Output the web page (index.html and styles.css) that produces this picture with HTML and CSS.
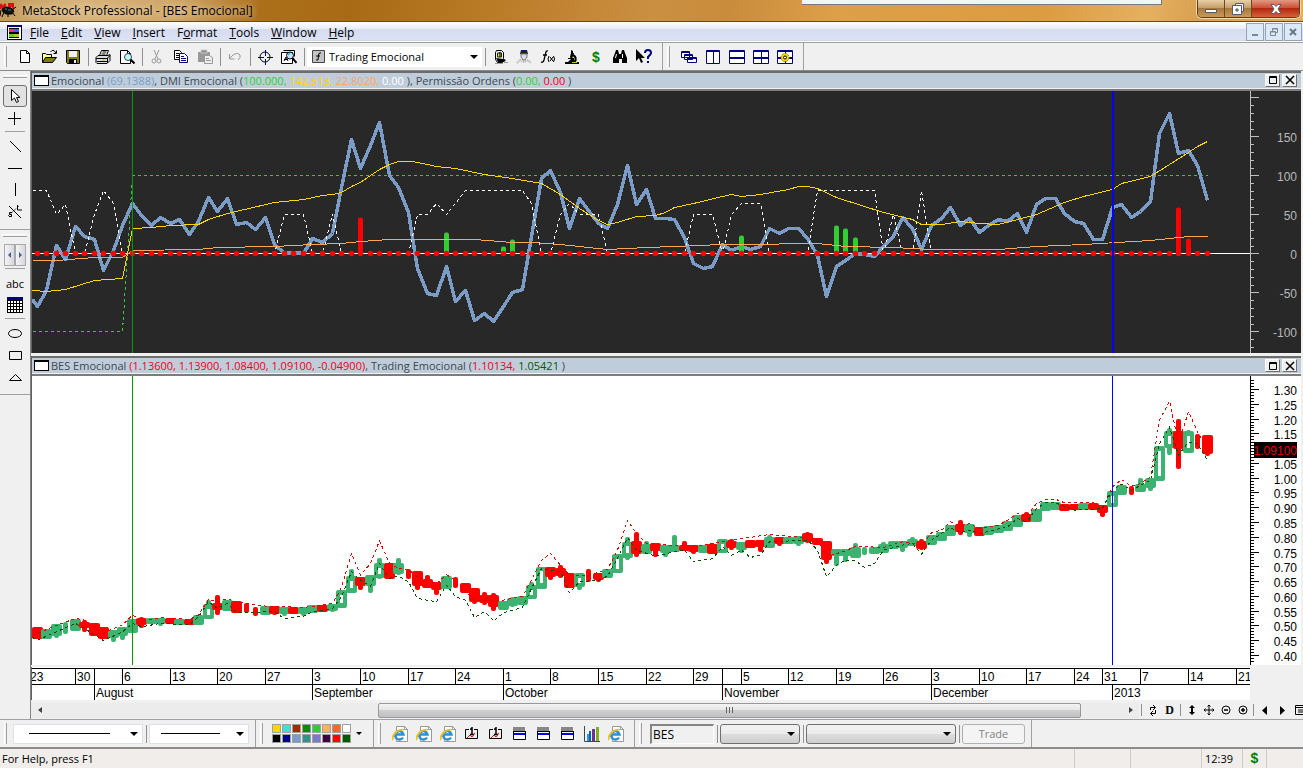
FILE: index.html
```html
<!DOCTYPE html>
<html lang="en">
<head>
    <meta charset="UTF-8">
    <meta name="viewport" content="width=device-width, initial-scale=1.0">
    <title>MetaStock Professional - [BES Emocional]</title>
    <link rel="stylesheet" href="styles.css">
</head>
<body>
    <svg class="defs" width="0" height="0" aria-hidden="true">
        <symbol id="ie" viewBox="0 0 16 16">
            <path d="M4.500.5h8l3 3v12h-11z" fill="#fff" stroke="#999"/>
            <path d="M12.500.5v3h3" fill="none" stroke="#999"/>
            <path d="M11 11.500A4.200 4.200 0 1 1 11.500 8.500H4" fill="none" stroke="#2a8fd8" stroke-width="2.400"/>
            <path d="M1 14C-1 10 6 2 12 4" fill="none" stroke="#f0c020" stroke-width="1.800"/>
        </symbol>
        <symbol id="down" viewBox="0 0 16 16">
            <path d="M5 3.500H1.500v9h12v-9H10" fill="none" stroke="#000"/>
            <path d="M8 1v7M6 3h2M6 8.500h4" stroke="#000" stroke-width="1.500"/>
            <path d="M3 12l3-3 2 2 3-4" fill="none" stroke="#e00"/>
        </symbol>
        <symbol id="win" viewBox="0 0 16 16">
            <path d="M1 1h12v4H1z" fill="#888"/>
            <path d="M1.500 5.500h12v8h-12z" fill="#fff" stroke="#000"/>
            <path d="M1 5h13v1H1z"/>
            <path d="M2 7h11v2H2z" fill="#00f"/>
        </symbol>
    </svg>

    <header class="titlebar">
        <svg class="logo" width="17" height="18" viewBox="0 0 17 18">
            <path d="M0 4l1 5M1 4l2 4 2-4v5M14 4H9v2h4v3H9" fill="none" stroke="#e01010" stroke-width="2"/>
            <path d="M2 9l4-2 5 1 3 3-2 3H6L3 12zM1 10l-1 6M4 12l-2 5M8 13v4M12 12l3 4M13 9l3-2" stroke="#000" fill="#111"/>
            <path d="M5 9h2M8 10h3" stroke="#3a8a8a"/>
        </svg>
        <h1>MetaStock Professional - [BES Emocional]</h1>
        <div class="tray"></div>
        <div class="caption">
            <button aria-label="Minimize"><svg width="14" height="12" viewBox="0 0 14 12"><path d="M1.500 6.500h11v3h-11z" fill="#fff" stroke="#555a70"/></svg></button>
            <button aria-label="Restore"><svg width="14" height="14" viewBox="0 0 14 14"><path d="M4.500 1.500h8v8h-8z" fill="#eee" stroke="#555a70"/><path d="M1.500 3.500h9v9h-9z" fill="#fff" stroke="#555a70"/><path d="M5 7h2v2H5z" fill="#c96" stroke="#555a70"/></svg></button>
            <button class="close" aria-label="Close"><svg width="14" height="12" viewBox="0 0 14 12"><path d="M2 1.500h3l2 2 2-2h3L9 6l3 4.500H9l-2-2-2 2H2L5 6z" fill="#fff" stroke="#555a70"/></svg></button>
        </div>
    </header>

    <nav class="menubar">
        <svg width="16" height="16" viewBox="0 0 16 16" shape-rendering="crispEdges">
            <path d="M1 1h14v14H1z" fill="#fff" stroke="#000"/>
            <path d="M1 1h14v2H1z" fill="#000080"/>
            <path d="M3 5h5v3H3z" fill="#f03070"/><path d="M8 5h5v3H8z" fill="#4060f0"/>
            <path d="M3 10h5v3H3z" fill="#60d020"/><path d="M8 10h5v3H8z" fill="#c0c030"/>
            <path d="M3 4.500h10M3 8.500h10M3 9.500h10M3 13.500h10" stroke="#000"/>
        </svg>
        <button><u>F</u>ile</button>
        <button><u>E</u>dit</button>
        <button><u>V</u>iew</button>
        <button><u>I</u>nsert</button>
        <button>F<u>o</u>rmat</button>
        <button><u>T</u>ools</button>
        <button><u>W</u>indow</button>
        <button><u>H</u>elp</button>
        <div class="mdi">
            <button aria-label="Minimize chart"><svg width="10" height="10" viewBox="0 0 10 10"><path d="M2 7h6v2H2z" fill="#7b8794"/></svg></button>
            <button aria-label="Restore chart"><svg width="10" height="10" viewBox="0 0 10 10" fill="none" stroke="#7b8794"><path d="M3.500 4V1.500h5v4H7M3 2h6"/><path d="M1.500 4.500h5v4h-5zM1 5h6"/></svg></button>
            <button aria-label="Close chart"><svg width="10" height="10" viewBox="0 0 10 10"><path d="M2 2l6 6M8 2L2 8" stroke="#6b7784" stroke-width="2"/></svg></button>
        </div>
    </nav>

    <div class="toolbar" role="toolbar" aria-label="Standard">
        <div class="band">
            <i class="grip"></i>
            <button aria-label="New"><svg viewBox="0 0 16 16"><path d="M3.500 1.500h6l3 3v9h-9z" fill="#fff" stroke="#000"/><path d="M9.500 1.500v3h3" fill="none" stroke="#000"/></svg></button>
            <button aria-label="Open"><svg viewBox="0 0 16 16"><path d="M1.500 13.500v-9h3l1 1h5v3" fill="#ffff9c" stroke="#000"/><path d="M1.500 13.500l3-5h11l-4 5z" fill="#808000" stroke="#000"/><path d="M9.500 3l1.500-1.500h2L15 4M15.500 1.500v3h-3" fill="none" stroke="#000"/></svg></button>
            <button aria-label="Save"><svg viewBox="0 0 16 16"><path d="M1.500 1.500h13v13h-12l-1-1z" fill="#808000" stroke="#000"/><path d="M4 2h8v6H4z" fill="#eee"/><path d="M4 10h8v4H4z"/><path d="M9 11h2v3H9z" fill="#eee"/></svg></button>
            <i class="sep"></i>
            <button aria-label="Print"><svg viewBox="0 0 16 16"><path d="M4.500 6.500l2-5h7l-2 5" fill="#fff" stroke="#000"/><path d="M7.500 3h4M6.500 5h4" stroke="#000"/><path d="M1 8.500l2-2h10l2-1v6l-3 3H2l-1-1z" fill="#ddd" stroke="#000"/><path d="M1 9.500h11l3-3M2 12.500h10M12.500 9v5" stroke="#000" fill="none"/><path d="M7 11h3" stroke="#cc0"/></svg></button>
            <button aria-label="Print preview"><svg viewBox="0 0 16 16"><path d="M1.500 14.500v-13h7l3 3v10z" fill="#fff" stroke="#000"/><path d="M8.500 1.500v3h3" fill="none" stroke="#000"/><circle cx="9" cy="8" r="3.500" fill="#bff" stroke="#444"/><path d="M11.500 10.500l4 4" stroke="#000" stroke-width="2"/></svg></button>
            <i class="sep"></i>
            <button aria-label="Cut" disabled><svg viewBox="0 0 16 16"><path d="M5 1l4 9M10 1l-4 9" stroke="#999"/><circle cx="5" cy="12" r="2" fill="none" stroke="#999"/><circle cx="10" cy="12" r="2" fill="none" stroke="#999"/></svg></button>
            <button aria-label="Copy"><svg viewBox="0 0 16 16"><path d="M1.500 1.500h5l2 2v7h-7z" fill="#fff" stroke="#000"/><path d="M3 4.500h3M3 6.500h4M3 8.500h4" stroke="#000"/><path d="M6.500 4.500h5l3 3v6h-8z" fill="#fff" stroke="#000080"/><path d="M8 7.500h3M8 9.500h5M8 11.500h5" stroke="#000080"/></svg></button>
            <button aria-label="Paste" disabled><svg viewBox="0 0 16 16"><path d="M1 3h12v10H1z" fill="#999"/><path d="M4 1h6v3H4z" fill="#888" stroke="#ccc"/><path d="M7.500 6.500h5l3 2v6h-8z" fill="#eee" stroke="#999"/><path d="M9 9.500h3M9 11.500h5" stroke="#999"/></svg></button>
            <i class="sep"></i>
            <button aria-label="Undo" disabled><svg viewBox="0 0 16 16"><path d="M3 9l3-3q5-3 7 0 1 3-2 5" fill="none" stroke="#999"/><path d="M2.500 5v5h5" fill="none" stroke="#999"/></svg></button>
            <i class="sep"></i>
            <button aria-label="Crosshair"><svg viewBox="0 0 16 16"><circle cx="8" cy="8" r="5" fill="none" stroke="#000"/><path d="M8.500 1v6M8.500 10v6M1 8.500h6M10 8.500h6" stroke="#000080"/></svg></button>
            <button aria-label="Zoom"><svg viewBox="0 0 16 16"><path d="M.5 3.500h11v11H.5z" fill="#fff" stroke="#000"/><path d="M2.500 1.500h11v6M3 12l2-4 2 4M3 10.500h4" stroke="#000" fill="none"/><circle cx="9" cy="6.500" r="3.500" fill="#cdf" stroke="#000"/><path d="M7 6l2-2" stroke="#0cc" stroke-width="1.500"/><path d="M11.500 9l4 5" stroke="#000" stroke-width="2"/></svg></button>
            <i class="sep"></i>
            <label class="pick template">
                <svg width="13" height="13" viewBox="0 0 13 13"><path d="M.5.5h12v12H.5z" fill="#c4c4c4" stroke="#444"/><path d="M9 3Q7 2 6.500 5L6 10H4M4 6h4" fill="none" stroke="#000"/></svg>
                <select aria-label="Template"><option>Trading Emocional</option></select>
            </label>
            <i class="sep"></i>
            <button aria-label="Expert Advisor"><svg viewBox="0 0 16 16"><path d="M4.500 1.500h5l2 2v6l1 2-2 2h-5l-2-3v-7z" fill="#eee" stroke="#000"/><path d="M5.500 4h4v4h-4z" fill="#dd0" stroke="#222"/><path d="M4 9l2 4h6l2-2-3-1z"/><path d="M8 3v5" stroke="#000"/><path d="M3 14.500h8M12 13.500h4" stroke="#999"/></svg></button>
            <button aria-label="The Explorer"><svg viewBox="0 0 16 16"><path d="M5 1h6l1 4H4z" fill="#222"/><path d="M7 1h2v2H7z" fill="#00c"/><path d="M5 5h6v3l-2 3H7L5 8z" fill="#ddd" stroke="#777"/><path d="M1 14l3-3 4 2 4-2 3 3" stroke="#aaa" stroke-width="2" stroke-dasharray="1 1" fill="none"/></svg></button>
            <button aria-label="Indicator Builder"><svg viewBox="0 0 16 16"><path d="M8 2Q6 1 5.500 5L4 11q-1 3-3 2M3 6h4" fill="none" stroke="#000" stroke-width="1.300"/><path d="M9 7q-2 3 0 6M13.500 7q2 3 0 6M10 8l3 4M13 8l-3 4" fill="none" stroke="#000"/></svg></button>
            <button aria-label="System Tester"><svg viewBox="0 0 16 16"><path d="M7 1l2 1v2h1l-2 6H7l-1-2 1-4zM4 9h6v1H4zM1 13h14v2H1z"/><path d="M4 13l3-3h3l1 3z"/><path d="M9 6q4 2 2 7" stroke="#000" stroke-width="2" fill="none"/><path d="M8 13.500h5" stroke="#cc0"/></svg></button>
            <button aria-label="OptionScope" class="dollar">$</button>
            <button aria-label="Find"><svg viewBox="0 0 16 16"><path d="M4 1h2l1 4h2l1-4h2l1 3 2 5v5h-5v-4H7v4H1V9l2-5z"/><path d="M3.500 9l1-4M10.500 9V5" stroke="#fff"/></svg></button>
            <button aria-label="What's this"><svg viewBox="0 0 16 16"><path d="M0 0v12l3-3 2 5 2-1-2-4h4z"/><path d="M9 4q0-3 3-3t3 3q0 1-3 4v2M12 12v2" stroke="#000080" stroke-width="2" fill="none"/></svg></button>
        </div>
        <div class="band layouts">
            <i class="grip"></i>
            <button aria-label="Cascade"><svg viewBox="0 0 16 16" fill="#fff" stroke="#000080"><path d="M.5 2.500h8v6h-8zM1 3.500h7M3.500 5.500h8v5h-8zM4 6.500h7M6.500 8.500h9v5h-9zM7 9.500h8"/></svg></button>
            <button aria-label="Tile columns"><svg viewBox="0 0 16 16" fill="#fff" stroke="#000080"><path d="M1.500 1.500h13v13h-13zM1 2.500h14M8.500 2v12"/></svg></button>
            <button aria-label="Tile rows"><svg viewBox="0 0 16 16" fill="#fff" stroke="#000080"><path d="M.5 1.500h15v13H.5zM0 2.500h16M0 8.500h16M0 9.500h16"/></svg></button>
            <button aria-label="Tile grid"><svg viewBox="0 0 16 16" fill="#fff" stroke="#000080"><path d="M.5 1.500h15v13H.5zM0 2.500h16M0 8.500h16M0 9.500h16M8.500 2v12"/></svg></button>
            <button aria-label="Tile options"><svg viewBox="0 0 16 16" fill="#fff" stroke="#000080"><path d="M.5 1.500h15v13H.5zM0 2.500h16M0 8.500h16M0 9.500h16M8.500 2v12"/><circle cx="8" cy="8.500" r="4" fill="#fd0" stroke="#880" stroke-dasharray="2 1"/><circle cx="8" cy="8.500" r="1.500" fill="#fff" stroke="#000"/></svg></button>
        </div>
    </div>

    <div class="workspace">
        <aside class="toolbox" role="toolbar" aria-label="Drawing">
            <div class="group">
                <i class="hgrip"></i>
                <button class="active" aria-label="Select"><svg viewBox="0 0 16 16"><path d="M4.500 1.500v11l3-2.500 2 4.500 2-1-2-4h3.500z" fill="#fff" stroke="#000"/></svg></button>
                <button aria-label="Crosshair"><svg viewBox="0 0 16 16"><path d="M7.500 2v13M1 8.500h13" stroke="#000"/></svg></button>
                <i class="hsep"></i>
                <button aria-label="Trendline"><svg viewBox="0 0 16 16"><path d="M3 3l11 11" stroke="#000"/></svg></button>
                <button aria-label="Horizontal line"><svg viewBox="0 0 16 16"><path d="M1 8.500h14" stroke="#000"/></svg></button>
                <button aria-label="Vertical line"><svg viewBox="0 0 16 16"><path d="M8.500 1v13" stroke="#000"/></svg></button>
                <button aria-label="Speed line"><svg viewBox="0 0 16 16"><path d="M2 2l12 12" stroke="#000"/><path d="M1 12L12 2" stroke="#000" stroke-dasharray="1 1"/><path d="M10.500 1v5H15M5 8.500H2.500v2h2v2H2" stroke="#000" fill="none"/></svg></button>
            </div>
            <div class="group">
                <i class="hgrip"></i>
                <div class="spin">
                    <button aria-label="Previous"></button>
                    <button aria-label="Next" class="next"></button>
                </div>
                <i class="hsep"></i>
                <button class="abc">abc</button>
                <button aria-label="Grid"><svg viewBox="0 0 16 16"><path d="M0 0h16v16H0z" fill="#fff"/><path d="M.5 0v16M3.500 3v13M6.500 3v13M9.500 3v13M12.500 3v13M15.500 0v16M0 3.500h16M0 6.500h16M0 9.500h16M0 12.500h16M0 15.500h16" stroke="#000"/><path d="M0 0h16v3H0z" fill="#000080"/></svg></button>
                <i class="hsep"></i>
                <button aria-label="Ellipse"><svg viewBox="0 0 16 16"><ellipse cx="8" cy="8.500" rx="6.500" ry="4" fill="none" stroke="#000"/></svg></button>
                <button aria-label="Rectangle"><svg viewBox="0 0 16 16"><path d="M2.500 4.500h12v8h-12z" fill="none" stroke="#000"/></svg></button>
                <button aria-label="Triangle"><svg viewBox="0 0 16 16"><path d="M2.500 11.500h12l-6-6z" fill="none" stroke="#000"/></svg></button>
            </div>
        </aside>

        <main class="charts">
            <section class="pane pane-emo">
                <header>
                    <i class="chip"></i>
                    <h2>Emocional <span class="c-blue">(69.1388)</span>, DMI Emocional (<span class="c-green">100.000,</span> <span class="c-gold">142.513,</span> <span class="c-orange">22.8020,</span> <span class="c-white">0.00</span> ), Permissão Ordens (<span class="c-green">0.00,</span> <span class="c-red">0.00</span> )</h2>
                    <button aria-label="Maximize pane"><svg viewBox="0 0 10 10"><path d="M1.500 1.500h7v7h-7zM1 2.500h8" fill="none" stroke="#000"/></svg></button>
                    <button aria-label="Close pane"><svg viewBox="0 0 10 10"><path d="M1 1l8 8M9 1L1 9" stroke="#000" stroke-width="1.500"/></svg></button>
                </header>
                <svg class="plot" id="emo"></svg>
            </section>
            <section class="pane pane-price">
                <header>
                    <i class="chip"></i>
                    <h2>BES Emocional <span class="c-red">(1.13600, 1.13900, 1.08400, 1.09100, -0.04900)</span>, Trading Emocional (<span class="c-red">1.10134,</span> <span class="c-dark">1.05421</span> )</h2>
                    <button aria-label="Maximize pane"><svg viewBox="0 0 10 10"><path d="M1.500 1.500h7v7h-7zM1 2.500h8" fill="none" stroke="#000"/></svg></button>
                    <button aria-label="Close pane"><svg viewBox="0 0 10 10"><path d="M1 1l8 8M9 1L1 9" stroke="#000" stroke-width="1.500"/></svg></button>
                </header>
                <svg class="plot" id="price"></svg>
            </section>
            <svg class="ruler" id="ruler"></svg>
            <div class="scrollrow">
                <div class="scrollbar">
                    <button class="left" aria-label="Scroll left"></button>
                    <span class="before"></span>
                    <span class="thumb"><i></i><i></i><i></i></span>
                    <span class="after"></span>
                    <button class="right" aria-label="Scroll right"></button>
                </div>
                <i class="sep"></i>
                <button aria-label="Refresh"><svg viewBox="0 0 12 12"><path d="M3.500 6V3.500H8M6 1l2.500 2.500L6 6M8.500 6v3.500H4M6 7L3.500 9.500 6 12" fill="none" stroke="#000"/></svg></button>
                <button class="period">D</button>
                <i class="sep"></i>
                <button aria-label="Fit height"><svg viewBox="0 0 12 12"><path d="M6 1l3 3H7v4h2l-3 3-3-3h2V4H3z"/></svg></button>
                <button aria-label="Move"><svg viewBox="0 0 12 12"><path d="M6 1v10M1 6h10M4.500 2.500L6 1l1.500 1.500M4.500 9.500L6 11l1.500-1.500M2.500 4.500L1 6l1.500 1.500M9.500 4.500L11 6 9.500 7.500" fill="none" stroke="#000"/></svg></button>
                <button aria-label="Zoom out"><svg viewBox="0 0 12 12"><circle cx="6" cy="6" r="4" fill="none" stroke="#000"/><path d="M4 6h4" stroke="#000" stroke-width="1.500"/></svg></button>
                <button aria-label="Zoom in"><svg viewBox="0 0 12 12"><circle cx="6" cy="6" r="4" fill="none" stroke="#000"/><path d="M4 6h4M6 4v4" stroke="#000" stroke-width="1.500"/></svg></button>
                <i class="sep"></i>
                <button aria-label="Back"><svg viewBox="0 0 12 12"><path d="M8 2v9L3 6.500z"/></svg></button>
                <button aria-label="Forward"><svg viewBox="0 0 12 12"><path d="M4 2v9l5-4.500z"/></svg></button>
                <button aria-label="List"><svg viewBox="0 0 12 12"><path d="M2.500 1.500h8v9h-8zM2 3.500h8M5 6h5M5 8h5" fill="none" stroke="#000"/></svg></button>
            </div>
        </main>
    </div>

    <div class="bottombar" role="toolbar" aria-label="Line and trade">
        <div class="band">
            <i class="grip"></i>
            <label class="pick line-style"><select aria-label="Line style"><option></option></select></label>
            <i class="sep"></i>
            <label class="pick line-weight"><select aria-label="Line weight"><option></option></select></label>
        </div>
        <div class="band colors">
            <i class="grip"></i>
            <div class="palette" id="palette"></div>
            <button class="more" aria-label="More colors"></button>
        </div>
        <div class="band links">
            <i class="grip"></i>
            <button aria-label="Web 1"><svg><use href="#ie"/></svg></button>
            <button aria-label="Web 2"><svg><use href="#ie"/></svg></button>
            <button aria-label="Web 3"><svg><use href="#ie"/></svg></button>
            <button aria-label="Download 1"><svg><use href="#down"/></svg></button>
            <button aria-label="Download 2"><svg><use href="#down"/></svg></button>
            <button aria-label="Window 1"><svg><use href="#win"/></svg></button>
            <button aria-label="Window 2"><svg><use href="#win"/></svg></button>
            <button aria-label="Window 3"><svg><use href="#win"/></svg></button>
            <button aria-label="Statistics"><svg viewBox="0 0 16 16"><path d="M.5 0v15.500H16" fill="none" stroke="#444"/><path d="M3 8h2v7H3z" fill="#20a0e0"/><path d="M5 5h2v10H5z" fill="#1060b0"/><path d="M8 3h3v12H8z" fill="#703090"/><path d="M12 1h3v14h-3z" fill="#80b020"/></svg></button>
            <button aria-label="Web 4"><svg><use href="#ie"/></svg></button>
        </div>
        <div class="band trade">
            <i class="grip"></i>
            <input class="symbol" type="text" value="BES" aria-label="Symbol">
            <i class="sep"></i>
            <label class="pick grey account"><select aria-label="Account"><option></option></select></label>
            <i class="sep"></i>
            <label class="pick grey order"><select aria-label="Order"><option></option></select></label>
            <i class="sep"></i>
            <button class="trade-btn" disabled>Trade</button>
        </div>
    </div>

    <footer class="statusbar">
        <p>For Help, press F1</p>
        <span class="cell c1"></span>
        <span class="cell c2"></span>
        <span class="cell clock">12:39</span>
        <span class="cell dollar">$</span>
        <span class="cell c3"></span>
    </footer>
    <script src="app.js"></script>
</body>
</html>
```
FILE: styles.css
```css
* {
    box-sizing: border-box;
}

body {
    display: flex;
    flex-direction: column;
    min-height: 100vh;
    margin: 0;
    background: #f0f0f0;
    color: #000;
    font-family: "Open Sans", "Noto Sans", sans-serif;
    font-size: 11px;
}

h1, h2, p {
    margin: 0;
    font-size: inherit;
    font-weight: normal;
}

button, select, input {
    margin: 0;
    padding: 0;
    border: 0;
    background: none;
    color: inherit;
    font: inherit;
}

svg {
    display: block;
}

.defs {
    position: absolute;
}

/* title bar */
.titlebar {
    display: flex;
    align-items: flex-start;
    height: 22px;
    padding-right: 3px;
    border-bottom: 1px solid #6b4a20;
    background: linear-gradient(100deg, #c29a5c 0, #d8b47c 6%, #cfa567 14%, #ac6f1a 20%, #a86a14 27%, #bb7c28 38%, #cb8f42 50%, #c98c3c 56%, #dd9f48 64%, #dc9c40 80%, #e5b060 88%, #d8a050 92%, #e0ae68 100%);
}

.logo {
    margin-right: 5px;
}

.titlebar h1 {
    flex: 1;
    line-height: 21px;
    text-shadow: 0 0 6px #fff0d0;
    font-size: 12px;
}

.tray {
    width: 360px;
    height: 5px;
    margin-right: 35px;
    border: solid #777b80;
    border-width: 0 1px 1px 0;
    background: #f4f4f4;
}

.caption {
    display: flex;
    height: 18px;
    border: 1px solid #5b4020;
    border-top: 0;
    border-radius: 0 0 5px 5px;
    box-shadow: 0 0 0 1px #f0d8a8;
    overflow: hidden;
}

.caption button {
    display: grid;
    place-items: center;
    width: 27px;
    border-right: 1px solid #6b4a20;
    background: linear-gradient(#e8d0a8, #c29a64 50%, #a8783c 50%, #c8985c);
}

.caption .close {
    width: 47px;
    border: 0;
    background: linear-gradient(#e09a80, #cf5038 45%, #b02810 50%, #d86038);
}

/* menu */
.menubar {
    display: flex;
    align-items: center;
    gap: 12px;
    height: 21px;
    padding: 0 1px 0 6px;
    border-bottom: 1px solid #a0a0a0;
    background: linear-gradient(#fff, #e8ecf6 35%, #d6dcee 36%, #dde3f6 90%, #b8c0d8 91%, #fff 95%);
    font-size: 12px;
}

.menubar svg {
    margin-right: -4px;
}

.mdi {
    display: flex;
    gap: 1px;
    margin-left: auto;
}

.mdi button {
    display: grid;
    place-items: center;
    width: 18px;
    height: 18px;
    border: 1px solid #94a4b4;
    background: #dceaf8;
}

.mdi svg {
    margin: 0;
}

/* toolbars */
.toolbar {
    display: flex;
    height: 28px;
    border-bottom: 1px solid #8c8c8c;
}

.band {
    display: flex;
    align-items: center;
    padding: 0 6px 0 4px;
    border-right: 1px solid #a0a0a0;
}

.band button {
    display: grid;
    place-items: center;
    width: 24px;
    height: 22px;
}

.band button svg {
    width: 16px;
    height: 16px;
}

.grip {
    width: 3px;
    height: 21px;
    margin-right: 6px;
    border: solid #fff;
    border-width: 0 0 0 1px;
    border-right: 1px solid #a0a0a0;
}

.layouts .grip {
    margin-right: 7px;
}

.sep {
    width: 1px;
    height: 18px;
    margin: 0 2px 0 3px;
    background: #909090;
}

.pick {
    position: relative;
    display: flex;
    align-items: center;
    background: #fff;
}

.pick select {
    flex: 1;
    height: 20px;
    appearance: none;
}

.pick::after {
    content: "";
    position: absolute;
    right: 4px;
    border: solid transparent;
    border-width: 4px 4px 0;
    border-top-color: #000;
    pointer-events: none;
}

.template {
    width: 175px;
    padding-left: 5px;
    gap: 4px;
}

.band .dollar, .statusbar .dollar {
    color: #008000;
    font: bold 14px "Liberation Sans", Arial, sans-serif;
}

/* drawing tools */
.workspace {
    display: flex;
    flex: 1;
}

.toolbox {
    width: 31px;
    border-right: 1px solid #848484;
}

.group {
    display: flex;
    flex-direction: column;
    align-items: center;
    padding: 4px 0 6px;
    border-bottom: 1px solid #a0a0a0;
}

.group button {
    display: grid;
    place-items: center;
    width: 24px;
    height: 22px;
}

.group button svg {
    width: 16px;
    height: 16px;
}

.group .active {
    border: 1px solid #707070;
    border-radius: 3px;
    background: #e2e2e2;
}

.hgrip {
    width: 24px;
    height: 3px;
    margin-bottom: 7px;
    border: solid #a0a0a0;
    border-width: 0 0 1px;
    border-top: 1px solid #fff;
}

.hsep {
    width: 20px;
    height: 1px;
    margin: 2px 0 3px;
    background: #a0a0a0;
}

.spin {
    display: flex;
}

.spin button {
    width: 11px;
    border: 1px solid #a8a8b0;
    background: linear-gradient(90deg, #f4f4f4, #d8d8dc);
}

.spin button::before {
    content: "";
    border: solid transparent;
    border-width: 3px 3px 3px 0;
    border-right-color: #4060a0;
}

.spin .next::before {
    border-width: 3px 0 3px 3px;
    border-left-color: #4060a0;
}

/* chart panes */
.charts {
    display: flex;
    flex: 1;
    flex-direction: column;
    min-width: 0;
    overflow: hidden;
}

.pane {
    display: flex;
    flex-direction: column;
    margin-right: 2px;
    margin-bottom: 3px;
    border-left: 1px solid #606060;
}

.pane-emo {
    flex: 262 1 20px;
}

.pane-price {
    flex: 290 1 20px;
    margin-bottom: 2px;
}

.pane header {
    display: flex;
    align-items: center;
    height: 20px;
    padding: 0 4px 0 2px;
    border-top: 2px solid #6c6c6c;
    border-bottom: 2px solid #7c7c7c;
    background: #bfcddb;
    box-shadow: inset 0 -1px #f0f0f0;
}

.pane-emo header {
    padding-bottom: 2px;
}

.chip {
    width: 15px;
    height: 11px;
    margin-right: 2px;
    border: 1px solid #000;
    border-top-width: 2px;
    background: #fff;
}

.pane h2 {
    flex: 1;
    color: #404850;
}

.pane header button {
    display: grid;
    place-items: center;
    width: 15px;
    height: 13px;
    margin-left: 2px;
    border: 1px solid #fff;
    border-right-color: #707070;
    border-bottom-color: #707070;
    background: #f0f0f0;
}

.pane header button svg {
    width: 10px;
    height: 10px;
}

.c-blue { color: #7a9cc6; }
.c-green { color: #32cd32; }
.c-gold { color: #ffd700; }
.c-orange { color: #ffa654; }
.c-white { color: #fff; }
.c-red { color: #f00018; }
.c-dark { color: #005a00; }

.plot {
    flex: 1 1 0;
    width: 100%;
    min-height: 0;
    font: 12px "Liberation Sans", Arial, sans-serif;
}

.pane-emo .plot {
    background: #282828;
}

.pane-price .plot {
    background: #fff;
}

.ruler {
    width: calc(100% - 53px);
    height: 33px;
    border-left: 1px solid #606060;
    background: #fff;
    font: 12px "Liberation Sans", Arial, sans-serif;
}

.scrollrow {
    display: flex;
    align-items: center;
    width: calc(100% + 4px);
    height: 16px;
    margin: 2px 0 1px;
}

.scrollrow > button {
    display: grid;
    flex: none;
    place-items: center;
    width: 17px;
    height: 16px;
}

.scrollrow > button svg {
    width: 12px;
    height: 12px;
}

.scrollrow > .sep {
    flex: none;
    height: 12px;
    margin: 0 2px;
}

.scrollrow .period {
    font: bold 12px "Liberation Serif", serif;
}

.scrollbar {
    display: flex;
    flex: 1;
    height: 15px;
    background: #ececec;
}

.scrollbar button {
    display: grid;
    place-items: center;
    width: 17px;
}

.scrollbar button::before {
    content: "";
    border: solid transparent;
    border-width: 3px 4px 3px 0;
    border-right-color: #404040;
}

.scrollbar .right::before {
    border-width: 3px 0 3px 4px;
    border-left-color: #404040;
}

.before {
    flex: 330;
}

.thumb {
    display: flex;
    flex: 702;
    align-items: center;
    justify-content: center;
    gap: 2px;
    border: 1px solid #989898;
    border-radius: 2px;
    background: linear-gradient(#f4f4f4, #e4e4e6 48%, #cfcfd2 50%, #c0c0c4);
}

.thumb i {
    width: 1px;
    height: 6px;
    background: #606060;
}

.after {
    flex: 41;
}

/* bottom bars */
.bottombar {
    display: flex;
    height: 30px;
    border-top: 1px solid #a0a0a0;
    border-bottom: 2px solid #8c8c8c;
}

.bottombar .pick {
    height: 20px;
    border: 1px solid #dde2e8;
}

.line-style {
    width: 130px;
}

.line-weight {
    width: 100px;
}

.line-style::before, .line-weight::before {
    content: "";
    position: absolute;
    left: 15px;
    right: 32px;
    height: 1px;
    background: #000;
}

.line-weight::before {
    left: 11px;
    right: 28px;
}

.colors .grip {
    margin-right: 9px;
}

.palette {
    display: grid;
    grid-template-columns: repeat(8, 9px);
    gap: 1px;
}

.palette button {
    width: 9px;
    height: 9px;
    border: 1px solid #a0a0a0;
}

.band .more {
    width: 16px;
}

.more::before {
    content: "";
    border: solid transparent;
    border-width: 3px 3px 0;
    border-top-color: #000;
}

.links .grip {
    margin-right: 7px;
}

.trade .grip {
    margin-right: 8px;
}

.symbol {
    width: 64px;
    height: 20px;
    padding-left: 1px;
    border: 2px solid #848484;
    border-right: 1px solid #fff;
    border-bottom: 1px solid #fff;
    font-size: 12px;
}

.bottombar .grey {
    border: 1px solid #707070;
    border-radius: 3px;
    background: linear-gradient(#f2f2f2, #ebebeb 50%, #ddd 50%, #cfcfcf);
}

.account {
    width: 80px;
}

.order {
    width: 150px;
}

.band .trade-btn {
    width: 63px;
    height: 20px;
    border: 1px solid #adb2b5;
    border-radius: 3px;
    background: #f4f4f4;
    color: #838383;
}

.statusbar {
    display: flex;
    height: 19px;
    padding-left: 2px;
    background: #f0edeb;
    line-height: 20px;
}

.statusbar p {
    flex: 1;
}

.cell {
    border-left: 1px solid #d0ccca;
    text-align: center;
}

.c1 { width: 56px; }
.c2 { width: 71px; }
.clock { width: 41px; padding-right: 6px; }
.statusbar .dollar { width: 24px; line-height: 19px; }
.c3 { width: 37px; }
```
FILE: app.js
```js
const NS = 'http://www.w3.org/2000/svg';
const AXIS = 51;
const SLOTS = 128;

const emocional = [
    -68, -47, 11, -7, 35, 23, 18, -21, 4, 36, 65, 49, 37, 47, 39, 44, 25, 41, 72, 55,
    71, 38, 40, 31, 47, 12, 1, 2, 1, 20, 15, 26, 85, 147, 110, 139, 168, 101, 85, 53,
    -19, -51, -53, -16, -61, -47, -85, -76, -87, -68, -49, -46, 23, 97, 107, 79, 32, 71, 56, 39,
    32, 64, 113, 63, 83, 45, 46, 44, 21, -12, -19, -16, 12, 4, 9, 6, 10, 33, 26, 33,
    33, 20, -2, -55, -16, -8, 1, -1, -3, 10, 23, 47, 33, 6, 36, 46, 59, 36, 45, 27,
    36, 44, 41, 52, 27, 63, 71, 71, 52, 41, 39, 19, 19, 59, 63, 47, 54, 67, 154, 180,
    129, 133, 113, 69
];

// [bar, value] pairs
const gold = [[-.5, -47], [1, -48], [3, -45], [6, -34], [9, -32], [10, 33], [12, 34], [14, 37], [17, 38], [18, 44], [20, 52], [25, 66], [28, 70], [30, 75], [31, 76], [32, 79], [33, 86], [34, 91], [35, 100], [36, 108], [37, 115], [38, 119], [39.5, 119], [41, 115], [42, 112], [44, 110], [47, 102], [50, 97], [53, 90], [55, 76], [57, 58], [59, 43], [60, 38], [61, 40], [63, 48], [65, 49], [66, 53], [67, 59], [69, 65], [72, 74], [73, 76], [74, 74], [76, 76], [79, 82], [80, 87], [81, 87], [82, 84], [84, 73], [87, 61], [89, 53], [92, 44], [93, 38], [95, 38], [97, 41], [99, 39], [101, 38], [103, 44], [105, 51], [108, 66], [110, 74], [113, 83], [114, 90], [117, 99], [119, 115], [121, 130], [122, 138], [123, 144]];
const orange = [[-.5, -8], [2, -8], [6, -5], [9, -5], [10, 5], [17, 6], [19, 8], [25, 10], [29, 12], [32, 13], [34, 16], [37, 19], [40, 19], [42, 18], [46, 18], [50, 15], [52, 15], [55, 12], [58, 8], [60, 6], [62, 7], [64, 8], [67, 10], [72, 12], [76, 12], [80, 14], [82, 14], [85, 10], [90, 8], [94, 6], [101, 6], [105, 9], [110, 12], [117, 17], [121, 22], [123, 23]];
const white = [[-.5, 81], [1, 81], [2, 50], [3, 64], [4, 0], [5, 0], [6, 51], [7, 81], [8, 65], [9, 0], [25, 0], [26, 50], [28, 50], [29, 0], [30, 0], [31, 50], [32, 0], [39, 0], [40, 50], [41, 50], [42, 65], [43, 50], [44, 65], [45, 81], [51, 81], [52, 65], [53, 0], [54, 0], [55, 50], [56, 65], [57, 50], [59, 50], [60, 0], [68, 0], [69, 50], [71, 50], [72, 0], [73, 50], [74, 65], [76, 65], [77, 0], [81, 0], [82, 81], [88, 81], [89, 0], [90, 50], [91, 0], [92, 0], [93, 81], [94, 0], [123, 0]];
const trend = [[-.5, -100], [9, -100], [10, 100], [123, 100]];
const signals = [[34, 47, '#f00'], [120, 59, '#f00'], [121, 20, '#f00'], [43, 28], [49, 10], [50, 18], [74, 24], [84, 37], [85, 33], [86, 21]];

// candles: colour, body top, body bottom, [high, low]; levels count down from 0.9255
const candles = [
    'r 382 418', 'g 388 418', 'g 373 410 373 416', 'g 0 0 365 402', 'g 357 392', 'r 367 385 360 396', 'r 370 408', 'r 382 418', 'g 390 415 390 425', 'g 380 408 380 418',
    'g 357 398', 'r 355 375 350 382', 'g 355 374', 'g 353 372 353 376', 'r 355 372', 'g 356 374', 'r 356 374', 'g 346 376', 'g 312 358 300 358', 'r 310 330 284 344',
    'g 300 332', 'r 303 338', 'r 0 0 310 340', 'r 0 0 320 347', 'g 317 343', 'r 317 340 317 344', 'g 322 342 322 348', 'r 322 342', 'g 320 342 320 346', 'g 316 340',
    'r 314 334', 'g 313 333 313 338', 'g 270 323', 'g 228 278 208 278', 'r 230 258 230 268', 'g 225 258 225 280', 'g 190 236 174 236', 'r 188 235', 'g 190 222 174 226', 'r 0 0 206 235',
    'r 212 256 212 268', 'r 236 262 226 262', 'r 245 270 245 284', 'g 228 268', 'r 0 0 232 265', 'r 248 278', 'r 263 305 263 310', 'r 285 308 276 316', 'r 286 322 280 334', 'g 302 328',
    'g 295 320 290 320', 'g 288 316', 'g 256 298 246 298', 'g 200 265', 'r 200 230 200 240', 'r 204 228 196 234', 'r 218 262', 'g 220 262 220 270', 'r 0 0 207 246', 'r 218 240 218 244',
    'g 208 234', 'g 163 220', 'g 125 174 112 180', 'r 122 162 96 170', 'g 133 163 124 163', 'r 130 155 130 172', 'g 134 158 134 170', 'g 134 156 105 156', 'r 134 152 122 152', 'r 136 156 136 164',
    'g 134 158', 'r 132 162', 'g 118 160', 'r 122 142 116 148', 'g 126 150 126 158', 'r 121 144', 'r 121 142 121 158', 'g 112 144 104 144', 'r 110 130 110 138', 'g 110 130',
    'g 108 132 108 138', 'r 98 126 94 126', 'r 114 136', 'r 124 182 124 192', 'g 148 170 148 200', 'g 146 166 146 186', 'g 142 174 130 174', 'g 0 0 140 164', 'g 142 162', 'g 132 158 127 158',
    'g 124 148', 'g 124 146 124 156', 'g 116 138 112 138', 'r 122 146 118 150', 'g 105 136', 'g 96 124', 'g 74 106', 'r 70 94 60 104', 'g 72 100 72 112', 'r 80 106',
    'g 78 106', 'g 75 98', 'g 62 92', 'g 45 80', 'r 42 66 36 66', 'g 25 64', 'g 6 34', 'g 6 30', 'r 10 30', 'r 12 30',
    'g 8 30', 'r 8 28', 'r 15 40 15 50', 'g -27 22', 'g -45 -14', 'r 0 0 -44 -16', 'g -50 -26 -66 -26', 'g -68 -38 -68 -28', 'g -162 -58', 'g -207 -156 -218 -136',
    'r -207 -154 -243 -94', 'g -207 -142 -212 -142', 'r 0 0 -200 -156', 'r -196 -140 -196 -132'
];
const upper = [[-.5, 405], [0, 400], [2, 376], [4, 355], [5, 360], [7, 400], [8, 385], [9, 375], [10, 345], [11, 362], [13, 353], [16, 358], [17, 345], [18, 298], [19, 306], [20, 295], [21, 306], [24, 318], [28, 322], [30, 315], [31, 310], [32, 262], [33, 160], [34, 225], [35, 190], [36, 122], [37, 190], [38, 205], [39, 208], [40, 230], [42, 250], [43, 224], [44, 240], [46, 300], [49, 300], [51, 288], [52, 240], [53, 180], [54, 160], [55, 195], [56, 225], [58, 225], [60, 208], [61, 150], [62, 60], [63, 100], [64, 130], [67, 136], [70, 135], [73, 120], [77, 103], [80, 110], [82, 118], [83, 170], [85, 152], [86, 138], [89, 142], [91, 125], [93, 135], [94, 98], [95, 90], [96, 65], [97, 78], [98, 70], [99, 86], [101, 75], [102, 60], [103, 40], [104, 48], [105, 10], [106, -3], [107, -3], [108, 8], [111, 8], [112, 25], [113, -40], [114, -62], [115, -42], [116, -50], [117, -70], [118, -240], [119, -298], [120, -170], [121, -266], [122, -205], [123, -150]];
const lower = [[-.5, 412], [0, 420], [2, 395], [4, 370], [5, 385], [7, 422], [9, 395], [10, 370], [11, 380], [13, 370], [16, 374], [17, 350], [18, 305], [19, 325], [20, 310], [21, 337], [25, 335], [26, 356], [28, 348], [29, 335], [31, 325], [32, 290], [33, 215], [34, 240], [35, 258], [36, 190], [37, 235], [38, 228], [39, 245], [40, 295], [42, 305], [43, 255], [44, 290], [45, 300], [46, 352], [47, 335], [48, 362], [49, 338], [51, 322], [52, 265], [53, 205], [55, 215], [56, 278], [57, 245], [59, 240], [60, 228], [61, 175], [62, 112], [63, 150], [65, 168], [67, 155], [68, 150], [69, 184], [71, 176], [72, 140], [73, 165], [74, 150], [75, 172], [76, 165], [77, 125], [81, 120], [82, 150], [83, 230], [84, 195], [85, 180], [86, 182], [87, 202], [88, 190], [89, 150], [91, 135], [92, 130], [93, 162], [94, 120], [96, 82], [97, 98], [98, 90], [99, 100], [102, 80], [103, 55], [104, 65], [105, 25], [106, 8], [107, 8], [109, 30], [112, 25], [113, -30], [114, -48], [115, -30], [117, -60], [118, -170], [119, -220], [120, -135], [121, -175], [122, -170], [123, -118]];

const weeks = [[-1, '23'], [4, '30'], [9, '6'], [14, '13'], [19, '20'], [24, '27'], [29, '3'], [34, '10'], [39, '17'], [44, '24'], [49, '1'], [54, '8'], [59, '15'], [64, '22'], [69, '29'], [74, '5'], [79, '12'], [84, '19'], [89, '26'], [94, '3'], [99, '10'], [104, '17'], [109, '24'], [112, '31'], [116, '7'], [121, '14'], [126, '21']];
const months = [[6, 'August'], [29, 'September'], [49, 'October'], [72, 'November'], [94, 'December'], [113, '2013']];
const colors = ['#ffd700', '#40e0d0', '#a52a00', '#009000', '#32cd32', '#ffb060', '#ff6a20', '#fff', '#000', '#000090', '#7a9cc6', '#38908c', '#7a7ac6', '#400040', '#f00', '#005a00'];

function add(parent, tag, attrs, text) {
    const el = document.createElementNS(NS, tag);
    for (const key in attrs) el.setAttribute(key, attrs[key]);
    if (text !== undefined) el.textContent = text;
    parent.appendChild(el);
    return el;
}

function line(svg, x1, y1, x2, y2, stroke, width) {
    add(svg, 'path', { d: `M${x1} ${y1}L${x2} ${y2}`, stroke, 'stroke-width': width || 1, 'shape-rendering': 'crispEdges' });
}

function polyline(svg, points, x, y, stroke, width, dash) {
    add(svg, 'polyline', {
        points: points.map(p => x(p[0]) + ',' + y(p[1])).join(' '),
        fill: 'none', stroke, 'stroke-width': width, 'stroke-linejoin': 'round',
        'stroke-dasharray': dash || 'none', 'shape-rendering': 'crispEdges'
    });
}

function scaleX(width) {
    return i => Math.floor((i + 0.53) * width / SLOTS) + 0.5;
}

function drawEmocional() {
    const svg = document.getElementById('emo');
    svg.innerHTML = '';
    const w = svg.clientWidth - AXIS, h = svg.clientHeight;
    const x = scaleX(w);
    const y = v => Math.round(h * 0.62 - v * h / 336) + 0.5;

    line(svg, 0, y(0), w, y(0), '#fff');
    polyline(svg, trend, x, y, '#32cd32', 1, '3 3');
    polyline(svg, [[-.5, -58]].concat(emocional.map((v, i) => [i, v])), x, y, '#7a9cc6', 3.5);
    polyline(svg, white, x, y, '#fff', 1, '3 3');
    for (const [i, v, color] of signals) {
        const top = y(v);
        add(svg, 'rect', { x: x(i) - 2.5, y: top, width: 5, height: y(0) - top, rx: 2, fill: color || '#32cd32' });
    }
    polyline(svg, orange, x, y, '#ffa654', 1);
    polyline(svg, gold, x, y, '#ffd700', 1);
    emocional.forEach((v, i) => add(svg, 'circle', { cx: x(i), cy: y(0), r: 2.8, fill: '#f00' }));
    line(svg, x(10), 0, x(10), h, '#009a00');
    line(svg, x(113), 0, x(113), h, '#00f', 2);

    line(svg, w + .5, 0, w + .5, h, '#c0c0c0');
    for (let v = -120; v <= 200; v += 10) {
        line(svg, w, y(v), w + (v % 50 ? 4 : 9), y(v), '#c0c0c0');
        if (v % 50 === 0 && v < 200) {
            add(svg, 'text', { x: w + 47, y: y(v) + 5, 'text-anchor': 'end', fill: '#b8b8b8' }, v);
        }
    }
}

function drawPrice() {
    const svg = document.getElementById('price');
    svg.innerHTML = '';
    const w = svg.clientWidth - AXIS, h = svg.clientHeight;
    const x = scaleX(w);
    const y = p => h * 0.047 + (1.3 - p) * h * 1.022;
    const level = u => y(0.9255 - u / 886.8);

    candles.forEach((row, i) => {
        const [c, top, bottom, high, low] = row.split(' ');
        const fill = c === 'r' ? '#f00' : '#3cb371';
        const bar = (dx, a, b) => add(svg, 'rect', {
            x: x(i) - dx, y: Math.round(level(a)), width: dx * 2, height: Math.round(level(b) - level(a)), rx: 2, fill
        });
        if (high) bar(2.5, high, low);
        if (top === '0' && bottom === '0') return;
        bar(5.5, top, bottom);
        if (c === 'g' && bottom - top > 41) {
            add(svg, 'rect', { x: x(i) - 1.5, y: Math.round(level(+top + 14)), width: 3, height: Math.round((bottom - top - 28) / 3), fill: '#fff' });
        }
    });
    polyline(svg, upper, x, level, '#e00000', 1, '3 3');
    polyline(svg, lower, x, level, '#005000', 1, '3 3');
    line(svg, x(10), 0, x(10), h, '#009a00');
    line(svg, x(113), 0, x(113), h, '#00f');

    line(svg, w + .5, 0, w + .5, h, '#000');
    for (let cents = 133; cents >= 38; cents--) {
        const ty = Math.floor(y(cents / 100)) + .5;
        line(svg, w, ty, w + (cents % 5 ? 4 : 9), ty, '#000');
        if (cents % 5 === 0 && cents !== 110 && cents >= 40) {
            add(svg, 'text', { x: w + 47, y: ty + 5, 'text-anchor': 'end' }, (cents / 100).toFixed(2));
        }
    }
    const last = Math.round(y(1.091));
    add(svg, 'rect', { x: w + 4, y: last - 9, width: 43, height: 16 });
    add(svg, 'text', { x: w + 47, y: last + 4, 'text-anchor': 'end', fill: '#e00000' }, '1.09100');
}

function drawRuler() {
    const svg = document.getElementById('ruler');
    svg.innerHTML = '';
    const w = svg.clientWidth;
    const x = scaleX(w);
    line(svg, 0, 1.5, w, 1.5, '#000');
    line(svg, 0, 17.5, w, 17.5, '#000');
    for (const [i, label] of weeks) {
        if (i >= 0) line(svg, x(i), 1, x(i), 17, '#000');
        add(svg, 'text', { x: i < 0 ? -2 : x(i) + 1.5, y: 14 }, label);
    }
    for (const [i, label] of months) {
        line(svg, x(i), label === '2013' ? 17 : 1, x(i), 33, '#000');
        add(svg, 'text', { x: x(i) + 1.5, y: 30 }, label);
    }
}

function draw() {
    drawEmocional();
    drawPrice();
    drawRuler();
}

for (const color of colors) {
    const swatch = document.createElement('button');
    swatch.style.background = color;
    swatch.setAttribute('aria-label', color);
    document.getElementById('palette').appendChild(swatch);
}

draw();
window.addEventListener('resize', draw);
```
